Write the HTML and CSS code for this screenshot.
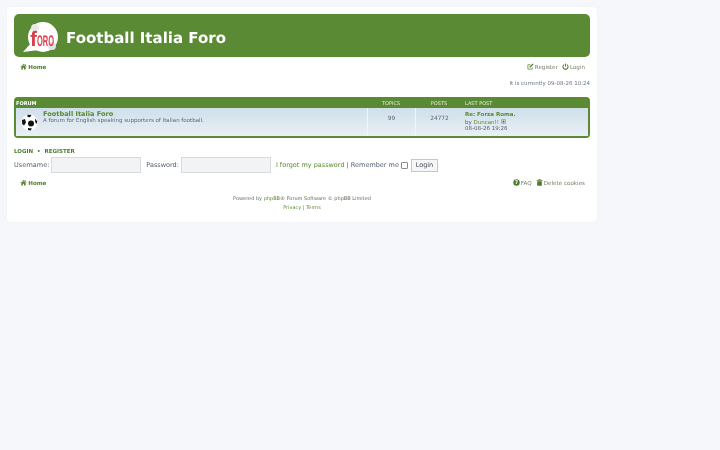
FILE: index.html
```html
<!DOCTYPE html>
<html lang="en">
<head>
    <meta charset="UTF-8">
    <title>Football Italia Foro</title>
    <link rel="stylesheet" href="styles.css">
</head>
<body>
    <div class="wrap">
        <div class="headerbar">
            <svg class="logo" width="36" height="31" viewBox="0 0 36 31">
                <circle cx="20" cy="15" r="15" fill="#fff"/>
                <path d="M9 20 L0 30 L16 28 Z" fill="#fff"/>
                <circle cx="12" cy="6" r="4" fill="#e8e8e8"/>
                <circle cx="29" cy="24" r="4" fill="#e4e4e4"/>
                <text class="logo-text logo-f" x="7" y="24">f</text>
                <g transform="translate(14 24) scale(1 1.7)">
                    <text class="logo-text" textLength="17" lengthAdjust="spacingAndGlyphs">ORO</text>
                </g>
            </svg>
            <h1>Football Italia Foro</h1>
        </div>

        <div class="navbar">
            <a class="home" href="#">
                <svg class="icon" viewBox="0 0 12 12"><path d="M6 1.5 L0.5 6.3 L1.2 7 L6 3 L10.8 7 L11.5 6.3 L9.6 4.6 V2 H8.2 V3.4 Z M2.3 7 V11 H5 V8 H7 V11 H9.7 V7 L6 4 Z"/></svg>
                Home
            </a>
            <div class="nav-right">
                <a href="#">
                    <svg class="icon" viewBox="0 0 12 12"><path class="line" d="M9 7.5 V10.5 H1.5 V3 H6"/><path d="M4.5 6 L9.8 0.8 L11.3 2.3 L6 7.5 L4.2 7.9 Z"/></svg>
                    Register
                </a>
                <a href="#">
                    <svg class="icon" viewBox="0 0 12 12"><path class="line thick" d="M3.6 2.8 A4.4 4.4 0 1 0 8.4 2.8"/><path class="line thick" d="M6 1 V6"/></svg>
                    Login
                </a>
            </div>
        </div>

        <p class="time">It is currently 09-08-26 10:24</p>

        <div class="forabg">
            <div class="forum-head">
                <span class="col-name">FORUM</span>
                <span class="col-num">TOPICS</span>
                <span class="col-num">POSTS</span>
                <span class="col-last">LAST POST</span>
            </div>
            <div class="forum-row">
                <div class="col-name forum-info">
                    <svg class="ball" width="17" height="17" viewBox="0 0 17 17">
                        <circle cx="8.5" cy="8.5" r="8" fill="#fff"/>
                        <circle cx="10" cy="9.5" r="3" fill="#111"/>
                        <path d="M1 6 L4 5 L5 8.5 L3 11.5 L1.2 10 Z M6.5 0.8 L10.5 1 L9 3.2 L6.5 3 Z M14 4.5 L16.3 7.5 L15.5 10 L14.2 8 Z M7 14 L11 14.5 L9.5 16.4 L7 16 Z" fill="#111"/>
                    </svg>
                    <div class="forum-text">
                        <a class="forum-title" href="#">Football Italia Foro</a>
                        <div class="forum-desc">A forum for English speaking supporters of Italian football.</div>
                    </div>
                </div>
                <div class="col-num stat">99</div>
                <div class="col-num stat">24772</div>
                <div class="col-last last-post">
                    <a class="last-title" href="#">Re: Forza Roma.</a>
                    <div>by <a href="#">Duncan!!</a>
                        <svg class="icon small" viewBox="0 0 12 12"><path class="line" d="M1.5 1.5 H10.5 V10.5 H1.5 Z"/><path d="M3 7 L6 3 L9 7 H7 V9 H5 V7 Z"/></svg>
                    </div>
                    <div>08-08-26 19:26</div>
                </div>
            </div>
        </div>

        <div class="login-title"><a href="#">LOGIN</a> <span class="dot">•</span> <a href="#">REGISTER</a></div>
        <form class="login-form">
            <label for="username">Username:</label>
            <input type="text" id="username" class="inputbox">
            <label class="pass-label" for="password">Password:</label>
            <input type="password" id="password" class="inputbox">
            <span class="login-links"><a href="#">I forgot my password</a> | Remember me</span>
            <input type="checkbox" class="check">
            <button type="button" class="btn">Login</button>
        </form>

        <div class="navbar bottom">
            <a class="home" href="#">
                <svg class="icon" viewBox="0 0 12 12"><path d="M6 1.5 L0.5 6.3 L1.2 7 L6 3 L10.8 7 L11.5 6.3 L9.6 4.6 V2 H8.2 V3.4 Z M2.3 7 V11 H5 V8 H7 V11 H9.7 V7 L6 4 Z"/></svg>
                Home
            </a>
            <div class="nav-right">
                <a href="#">
                    <svg class="icon" viewBox="0 0 12 12"><circle cx="6" cy="6" r="5.5"/><text class="q" x="6" y="9" text-anchor="middle">?</text></svg>
                    FAQ
                </a>
                <a href="#">
                    <svg class="icon" viewBox="0 0 12 12"><path d="M4 0.5 H8 V1.8 H11 V3 H1 V1.8 H4 Z M2 3.8 H10 V11.5 H2 Z"/></svg>
                    Delete cookies
                </a>
            </div>
        </div>

        <div class="copyright">
            <p>Powered by <a href="#">phpBB</a>® Forum Software © phpBB Limited</p>
            <p><a href="#">Privacy</a> | <a href="#">Terms</a></p>
        </div>
    </div>
</body>
</html>
```

FILE: styles.css
```css
html, body {
    margin: 0;
    padding: 0;
}
body {
    font-family: "DejaVu Sans", Verdana, sans-serif;
    text-rendering: geometricPrecision;
    background: #f5f7fa;
    color: #55606f;
    font-size: 5.5px;
    height: 450px;
    overflow: hidden;
    padding-top: 7px;
    box-sizing: border-box;
}
a {
    color: #5a8a33;
    text-decoration: none;
}
p {
    margin: 0;
}
.wrap {
    width: 576px;
    margin-left: 7px;
    padding: 7px;
    height: 201px;
    background: #fff;
    border-radius: 4px;
    box-shadow: 0 0 1px #e6e9ed;
    will-change: transform;
}
.headerbar {
    height: 43px;
    background: #5a8a33;
    border-radius: 5px;
    display: flex;
    align-items: center;
    padding-left: 9px;
    box-sizing: border-box;
}
.headerbar h1 {
    margin: 4px 0 0 7px;
    font-size: 15px;
    font-weight: bold;
    color: #fff;
}
.logo {
    flex: none;
    margin-top: 4px;
}
.logo-text {
    font-family: "Liberation Sans", sans-serif;
    font-weight: bold;
    font-size: 9px;
    fill: #d8404c;
}
.logo-f {
    font-size: 21px;
}
.navbar {
    display: flex;
    justify-content: space-between;
    align-items: center;
    padding: 0 5px 0 6px;
    margin-top: 5px;
    height: 10px;
    font-size: 5.6px;
}
.navbar a {
    color: #77806e;
}
.navbar .home {
    color: #4f7c2c;
    font-weight: bold;
}
.nav-right {
    display: flex;
    gap: 4px;
}
.icon {
    width: 7px;
    height: 7px;
    fill: #4f7c2c;
    vertical-align: -1px;
}
.navbar .icon {
    margin-right: -0.7px;
}
.icon.small {
    width: 5px;
    height: 5px;
    vertical-align: -0.5px;
}
.line {
    fill: none;
    stroke: #4f7c2c;
    stroke-width: 1.2;
}
.line.thick {
    stroke-width: 1.8;
}
.q {
    font-size: 9px;
    font-weight: bold;
    fill: #fff;
}
.time {
    text-align: right;
    margin-top: 8px;
    height: 9px;
    line-height: 9px;
    color: #6b7688;
}
.forabg {
    margin-top: 8px;
    background: #5a8a33;
    border-radius: 4px;
    padding: 2px;
}
.forum-head,
.forum-row {
    display: flex;
}
.forum-head {
    height: 9px;
    line-height: 11px;
    color: #e6eedd;
    font-size: 5px;
}
.forum-head .col-name {
    font-weight: bold;
    color: #fff;
}
.forum-head .col-num {
    text-align: center;
}
.col-name {
    width: 351px;
    flex: none;
}
.col-num {
    width: 48px;
    flex: none;
}
.col-last {
    flex: 1;
    padding-left: 2px;
}
.forum-row {
    height: 28px;
    background: linear-gradient(to bottom, #cfdfea, #eaf0f5);
}
.forum-info {
    display: flex;
    align-items: center;
    gap: 5px;
    padding-left: 5px;
    box-sizing: border-box;
}
.ball {
    flex: none;
}
.forum-text {
    align-self: flex-start;
    margin-top: 2px;
}
.forum-title {
    font-size: 6.6px;
    font-weight: bold;
    color: #5a8a33;
    display: block;
    line-height: 8px;
}
.forum-desc {
    line-height: 6px;
    color: #5c6a80;
}
.stat {
    border-left: 1px solid #f3f6f9;
    box-sizing: border-box;
    text-align: center;
    font-size: 5.8px;
    line-height: 22px;
    color: #59667e;
}
.last-post {
    padding-top: 4px;
    line-height: 6.5px;
}
.last-title {
    font-weight: bold;
    color: #5a8a33;
}
.login-title {
    margin-top: 11px;
    font-weight: bold;
    line-height: 7px;
}
.login-title a {
    color: #4f7c2c;
}
.dot {
    margin: 0 2px;
    color: #4f7c2c;
}
.login-form {
    display: flex;
    align-items: center;
    margin-top: 1px;
    font-size: 6.5px;
    height: 16px;
}
.inputbox {
    width: 90px;
    height: 16px;
    box-sizing: border-box;
    border: 1px solid #d8dadb;
    background: #f1f3f4;
    margin: 0 0 0 2px;
    padding: 0;
}
.pass-label {
    margin-left: 5px;
}
.login-links {
    margin-left: 5px;
}
.check {
    appearance: none;
    box-sizing: border-box;
    width: 7px;
    height: 7px;
    margin: 1px 0 0 2px;
    background: #fff;
    border: 1px solid #8a8a8a;
    border-radius: 1px;
}
.btn {
    width: 27px;
    height: 13px;
    margin-left: 3px;
    padding: 0;
    font-family: inherit;
    font-size: 6.5px;
    color: #444b55;
    background: #f6f6f6;
    border: 1px solid #c7c7c7;
}
.bottom {
    margin-top: 5px;
    height: 9px;
}
.copyright {
    margin-top: 8px;
    text-align: center;
    font-size: 5px;
    line-height: 9px;
    color: #666f5d;
}
```
